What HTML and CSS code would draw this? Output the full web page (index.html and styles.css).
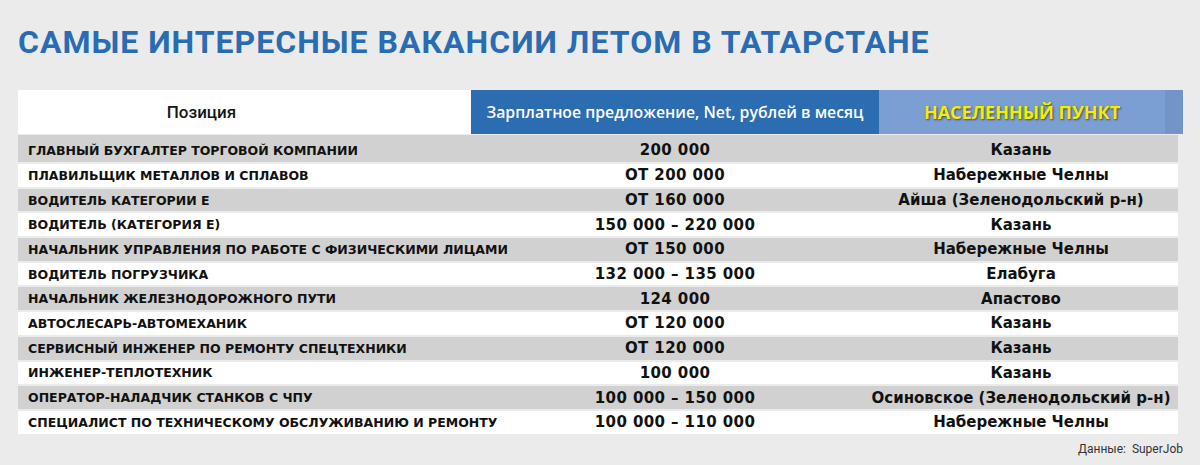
FILE: index.html
```html
<!DOCTYPE html>
<html lang="ru">
<head>
<meta charset="utf-8">
<title>Самые интересные вакансии летом в Татарстане</title>
<link rel="stylesheet" href="styles.css">
</head>
<body>
<div class="page">
  <h1 class="title">САМЫЕ ИНТЕРЕСНЫЕ ВАКАНСИИ ЛЕТОМ В ТАТАРСТАНЕ</h1>
  <div class="head">
    <div class="h-pos">Позиция</div>
    <div class="h-sal">Зарплатное предложение, Net, рублей в месяц</div>
    <div class="h-city"><span class="h-city-text">НАСЕЛЕННЫЙ ПУНКТ</span><span class="h-city-edge"></span></div>
  </div>
  <div class="rows">
    <div class="row gray first"><div class="c-pos">ГЛАВНЫЙ БУХГАЛТЕР ТОРГОВОЙ КОМПАНИИ</div><div class="c-sal">200 000</div><div class="c-city">Казань</div></div>
    <div class="row"><div class="c-pos">ПЛАВИЛЬЩИК МЕТАЛЛОВ И СПЛАВОВ</div><div class="c-sal">ОТ 200 000</div><div class="c-city">Набережные Челны</div></div>
    <div class="row gray"><div class="c-pos">ВОДИТЕЛЬ КАТЕГОРИИ Е</div><div class="c-sal">ОТ 160 000</div><div class="c-city">Айша (Зеленодольский р-н)</div></div>
    <div class="row"><div class="c-pos">ВОДИТЕЛЬ (КАТЕГОРИЯ Е)</div><div class="c-sal">150 000 – 220 000</div><div class="c-city">Казань</div></div>
    <div class="row gray"><div class="c-pos">НАЧАЛЬНИК УПРАВЛЕНИЯ ПО РАБОТЕ С ФИЗИЧЕСКИМИ ЛИЦАМИ</div><div class="c-sal">ОТ 150 000</div><div class="c-city">Набережные Челны</div></div>
    <div class="row"><div class="c-pos">ВОДИТЕЛЬ ПОГРУЗЧИКА</div><div class="c-sal">132 000 – 135 000</div><div class="c-city">Елабуга</div></div>
    <div class="row gray"><div class="c-pos">НАЧАЛЬНИК ЖЕЛЕЗНОДОРОЖНОГО ПУТИ</div><div class="c-sal">124 000</div><div class="c-city">Апастово</div></div>
    <div class="row"><div class="c-pos">АВТОСЛЕСАРЬ-АВТОМЕХАНИК</div><div class="c-sal">ОТ 120 000</div><div class="c-city">Казань</div></div>
    <div class="row gray"><div class="c-pos">СЕРВИСНЫЙ ИНЖЕНЕР ПО РЕМОНТУ СПЕЦТЕХНИКИ</div><div class="c-sal">ОТ 120 000</div><div class="c-city">Казань</div></div>
    <div class="row"><div class="c-pos">ИНЖЕНЕР-ТЕПЛОТЕХНИК</div><div class="c-sal">100 000</div><div class="c-city">Казань</div></div>
    <div class="row gray"><div class="c-pos">ОПЕРАТОР-НАЛАДЧИК СТАНКОВ С ЧПУ</div><div class="c-sal">100 000 – 150 000</div><div class="c-city">Осиновское (Зеленодольский р-н)</div></div>
    <div class="row"><div class="c-pos">СПЕЦИАЛИСТ ПО ТЕХНИЧЕСКОМУ ОБСЛУЖИВАНИЮ И РЕМОНТУ</div><div class="c-sal">100 000 – 110 000</div><div class="c-city">Набережные Челны</div></div>
  </div>
  <div class="source">Данные:&nbsp; SuperJob</div>
</div>
</body>
</html>
```

FILE: styles.css
```css
html, body {
  margin: 0;
  padding: 0;
}
body {
  background: #ebebeb;
  font-family: "DejaVu Sans", Roboto, sans-serif;
  color: #111;
}
.page {
  padding: 0 17px 0 18px;
  width: 1165px;
}
.title {
  margin: 22px 0 0 0;
  font-family: Roboto, "Noto Sans", sans-serif;
  font-size: 32px;
  line-height: 40px;
  font-weight: 700;
  letter-spacing: 1px;
  color: #2a6cb3;
  white-space: nowrap;
}
.head {
  margin-top: 28px;
  display: grid;
  grid-template-columns: 453px 408px minmax(0, 1fr);
  height: 44px;
}
.h-pos, .h-sal {
  display: flex;
  align-items: center;
  justify-content: center;
}
.h-pos {
  background: #fff;
  font-family: Roboto, sans-serif;
  font-size: 17px;
  font-weight: 500;
  color: #151515;
  padding-right: 86px;
}
.h-sal {
  background: #2c6db1;
  color: #fff;
  font-family: "Open Sans", sans-serif;
  font-size: 15.8px;
  font-weight: 600;
}
.h-city {
  display: flex;
  background: #7b9fd2;
}
.h-city-text {
  flex: 1;
  display: flex;
  align-items: center;
  justify-content: center;
  color: #f6ee00;
  font-family: "Open Sans", sans-serif;
  font-size: 18px;
  font-weight: 700;
  text-shadow: 1px 1px 2px rgba(40, 40, 60, 0.75);
}
.h-city-edge {
  width: 18px;
  background: #7295c9;
}
.rows {
  margin-top: 1px;
  width: 1160px;
  display: flex;
  flex-direction: column;
  gap: 2px;
}
.row {
  display: grid;
  grid-template-columns: 453px 408px minmax(0, 1fr);
  height: 22.7px;
  background: #fff;
  font-weight: 700;
}
.row.gray {
  background: #d1d1d1;
}
.row.first {
  height: 27px;
  padding-top: 3px;
  box-sizing: border-box;
}
.row > div {
  display: flex;
  align-items: center;
  white-space: nowrap;
  min-width: 0;
}
.c-pos {
  padding-left: 10px;
  font-size: 12.5px;
}
.c-sal, .c-city {
  justify-content: center;
  font-size: 15px;
}
.c-sal {
  letter-spacing: 0.4px;
}
.c-city {
  padding-right: 15px;
}
.source {
  margin-top: 7px;
  text-align: right;
  font-family: Roboto, sans-serif;
  font-size: 12px;
  color: #333;
  line-height: 16px;
}
```
